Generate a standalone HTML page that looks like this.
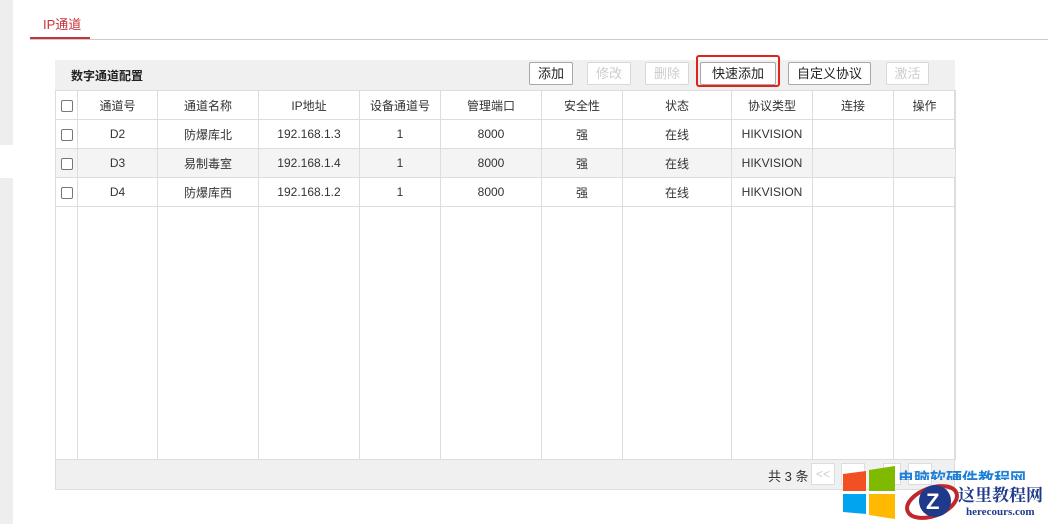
<!DOCTYPE html><html><head><meta charset="utf-8"><style>
*{margin:0;padding:0;box-sizing:border-box}
body{width:1048px;height:524px;background:#fff;position:relative;overflow:hidden;font-family:"Liberation Sans","Noto Sans CJK SC",sans-serif;font-size:12px;color:#333}
.a{position:absolute;white-space:nowrap}
.btn{position:absolute;top:62px;height:23px;border:1px solid #a8a8a8;background:#fff;font-size:13px;text-align:center;line-height:21px;border-radius:2px;color:#222}
.dis{color:#ccc;border-color:#d8d8d8}
table{position:absolute;left:55px;top:90px;border-collapse:collapse;width:900px;table-layout:fixed}
td{border:1px solid #ddd;height:29px;text-align:center;font-size:12px;padding:0}
.cb{display:inline-block;width:12px;height:12px;border:1px solid #777;border-radius:2px;vertical-align:middle;background:#fff}
</style></head><body>
<div class="a" style="left:0;top:0;width:13px;height:145px;background:#eee"></div>
<div class="a" style="left:0;top:178px;width:13px;height:346px;background:#eee"></div>
<div class="a" style="left:43px;top:14px;color:#c8333a;font-size:13px">IP通道</div>
<div class="a" style="left:30px;top:37px;width:60px;height:2px;background:#c8333a"></div>
<div class="a" style="left:30px;top:39px;width:1018px;height:1px;background:#ccc"></div>
<div class="a" style="left:55px;top:60px;width:900px;height:430px;border:1px solid #ddd;background:#fff"></div>
<div class="a" style="left:55px;top:60px;width:900px;height:30px;background:#f0f0f0"></div>
<div class="a" style="left:71px;top:67px;font-weight:bold;font-size:12px;color:#222">数字通道配置</div>
<div class="btn" style="left:529px;width:44px">添加</div>
<div class="btn dis" style="left:587px;width:44px">修改</div>
<div class="btn dis" style="left:645px;width:44px">删除</div>
<div class="a" style="left:696px;top:55px;width:84px;height:32px;border:2px solid #e0241b;border-radius:3px"></div>
<div class="btn" style="left:700px;width:76px">快速添加</div>
<div class="btn" style="left:788px;width:83px">自定义协议</div>
<div class="btn dis" style="left:886px;width:43px">激活</div>
<table>
<colgroup><col style="width:22px"><col style="width:80px"><col style="width:101px"><col style="width:101px"><col style="width:81px"><col style="width:101px"><col style="width:81px"><col style="width:109px"><col style="width:81px"><col style="width:81px"><col style="width:62px"></colgroup>
<tr><td><span class="cb"></span></td><td>通道号</td><td>通道名称</td><td>IP地址</td><td>设备通道号</td><td>管理端口</td><td>安全性</td><td>状态</td><td>协议类型</td><td>连接</td><td>操作</td></tr>
<tr><td><span class="cb"></span></td><td>D2</td><td>防爆库北</td><td>192.168.1.3</td><td>1</td><td>8000</td><td>强</td><td>在线</td><td>HIKVISION</td><td></td><td></td></tr>
<tr style="background:#f4f4f4"><td><span class="cb"></span></td><td>D3</td><td>易制毒室</td><td>192.168.1.4</td><td>1</td><td>8000</td><td>强</td><td>在线</td><td>HIKVISION</td><td></td><td></td></tr>
<tr><td><span class="cb"></span></td><td>D4</td><td>防爆库西</td><td>192.168.1.2</td><td>1</td><td>8000</td><td>强</td><td>在线</td><td>HIKVISION</td><td></td><td></td></tr>
<tr><td style="height:253px"></td><td></td><td></td><td></td><td></td><td></td><td></td><td></td><td></td><td></td><td></td></tr>
</table>
<div class="a" style="left:55px;top:459px;width:900px;height:31px;background:#f0f0f0;border:1px solid #ddd"></div>
<div class="a" style="left:768px;top:466px;font-size:13px">共 3 条</div>
<div class="a" style="left:811px;top:463px;width:24px;height:22px;border:1px solid #ddd;color:#ccc;text-align:center;line-height:20px;background:#fff">&lt;&lt;</div>
<div class="a" style="left:841px;top:463px;width:24px;height:22px;border:1px solid #ddd;background:#fff"></div>
<div class="a" style="left:883px;top:463px;width:18px;height:22px;border:1px solid #ddd;background:#fff"></div>
<div class="a" style="left:908px;top:463px;width:24px;height:22px;border:1px solid #ddd;color:#ccc;text-align:center;line-height:20px;background:#fff">&gt;&gt;</div>
<svg class="a" style="left:843px;top:466px" width="55" height="58"><polygon points="0,8 23,5 23,25 0,25" fill="#f25022"/><polygon points="26,4 52,0 52,25 26,25" fill="#7fba00"/><polygon points="0,28 23,28 23,48 0,46" fill="#00a4ef"/><polygon points="26,28 52,28 52,53 26,49" fill="#ffb900"/></svg>
<div class="a" style="left:898px;top:470px;color:#1e7fd8;font-size:16px;font-weight:bold;height:10px;overflow:hidden;line-height:20px">电脑软硬件教程网</div>
<svg class="a" style="left:902px;top:478px" width="60" height="46"><ellipse cx="30" cy="24" rx="26" ry="14" fill="none" stroke="#c0282d" stroke-width="4" transform="rotate(-20 30 24)"/><circle cx="33" cy="23" r="16" fill="#1f3a8a"/><text x="24" y="31" font-size="22" font-weight="bold" fill="#fff" font-family="Liberation Sans">Z</text></svg>
<div class="a" style="left:958px;top:484px;color:#1f3a8a;font-size:17px;font-weight:bold;font-family:'Noto Serif CJK SC',serif;line-height:20px">这里教程网</div>
<div class="a" style="left:966px;top:506px;color:#1f3a8a;font-size:11px;font-weight:bold;font-family:'Liberation Serif',serif">herecours.com</div>
</body></html>
